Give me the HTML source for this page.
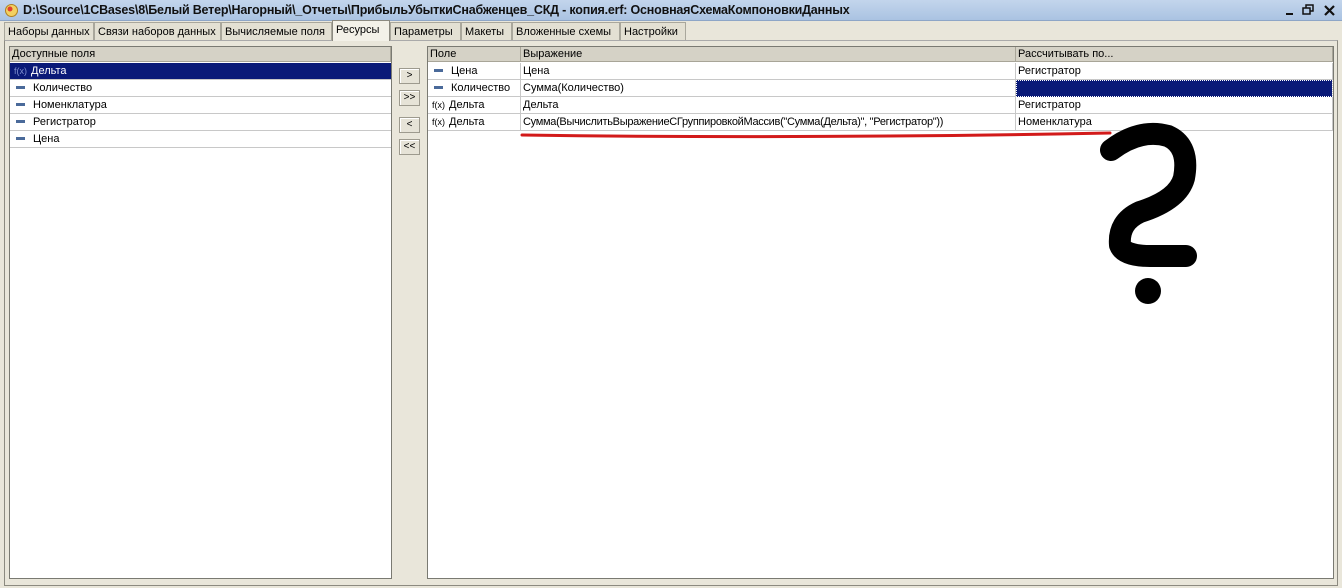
<!DOCTYPE html>
<html><head><meta charset="utf-8"><style>
*{margin:0;padding:0;box-sizing:border-box}
body{width:1342px;height:588px;background:#e9e6da;font-family:"Liberation Sans",sans-serif;font-size:11px;color:#000;position:relative;overflow:hidden}
.abs{position:absolute}
#title{left:0;top:0;width:1342px;height:21px;background:linear-gradient(#c3d5ec,#aac3e2);border-bottom:1px solid #8ea6c7}
#title span{position:absolute;left:23px;top:3px;font-size:12.5px;font-weight:bold;color:#111;letter-spacing:-0.2px}
.tab{position:absolute;top:22px;height:18px;border:1px solid #a9a79c;border-bottom:none;background:#e3e0d3;font-size:11px;padding:3px 0 0 3px;white-space:nowrap;overflow:hidden}
.tab.act{top:20px;height:21px;background:#f3f1e8;border-color:#8c8a80}
#panel{left:4px;top:40px;width:1334px;height:546px;border:1px solid #8c8a80;border-top:1px solid #aaa;background:#e9e6da}
.list{position:absolute;background:#fff;border:1px solid #7a7a72}
.hdr{position:absolute;top:0;height:15px;background:#d5d2c6;border-bottom:1px solid #a8a598;border-right:1px solid #a8a598;padding:1px 0 0 2px;font-size:11px}
.row{position:absolute;left:0;height:17px;border-bottom:1px solid #c8c8c8;font-size:11px}
.cell{position:absolute;top:0;height:17px;border-right:1px solid #c8c8c8;padding:2px 0 0 2px;white-space:nowrap}
.lc{position:absolute;top:0;left:0;height:17px;padding:2px 0 0 2px;white-space:nowrap}
.btn{position:absolute;left:399px;width:21px;height:16px;background:#e6e3d7;border:1px solid #9d9a8e;text-align:center;font-size:10px;line-height:14px;box-shadow:inset 1px 1px #fff}
.ic{display:inline-block;width:9px;height:3px;background:#4a6a9a;vertical-align:middle;margin:0 8px 2px 4px}
.fx{font-size:9px;margin:0 4px 0 2px}
</style></head><body>
<div id="title" class="abs">
<svg class="abs" style="left:4px;top:3px" width="15" height="15"><circle cx="7.5" cy="7.5" r="6" fill="#f2d060" stroke="#b08020"/><circle cx="6" cy="6" r="2.5" fill="#e04030"/></svg>
<span>D:\Source\1CBases\8\Белый Ветер\Нагорный\_Отчеты\ПрибыльУбыткиСнабженцев_СКД - копия.erf: ОсновнаяСхемаКомпоновкиДанных</span>
<div class="abs" style="left:1286px;top:13px;width:7px;height:2px;background:#111"></div>
<svg class="abs" style="left:1302px;top:4px" width="12" height="12"><rect x="4" y="1" width="7" height="6" fill="none" stroke="#111" stroke-width="1.5"/><rect x="1" y="4" width="7" height="6" fill="#b5cbe6" stroke="#111" stroke-width="1.5"/></svg>
<svg class="abs" style="left:1324px;top:5px" width="11" height="11"><path d="M1 1L10 10M10 1L1 10" stroke="#111" stroke-width="2.2"/></svg>
</div>
<div class="tab" style="left:4px;width:90px">Наборы данных</div>
<div class="tab" style="left:94px;width:127px">Связи наборов данных</div>
<div class="tab" style="left:221px;width:111px">Вычисляемые поля</div>
<div class="tab" style="left:390px;width:71px">Параметры</div>
<div class="tab" style="left:461px;width:51px">Макеты</div>
<div class="tab" style="left:512px;width:108px">Вложенные схемы</div>
<div class="tab" style="left:620px;width:66px">Настройки</div>
<div id="panel" class="abs"></div>
<div class="tab act" style="left:332px;width:58px">Ресурсы</div>

<div class="list" style="left:9px;top:46px;width:383px;height:533px">
<div class="hdr" style="left:0;width:381px">Доступные поля</div>
<div class="row" style="top:16px;width:381px;background:#0a1a78;color:#fff"><div class="lc"><span class="fx" style="color:#8090d0">f(x)</span>Дельта</div></div>
<div class="row" style="top:33px;width:381px"><div class="lc"><span class="ic"></span>Количество</div></div>
<div class="row" style="top:50px;width:381px"><div class="lc"><span class="ic"></span>Номенклатура</div></div>
<div class="row" style="top:67px;width:381px"><div class="lc"><span class="ic"></span>Регистратор</div></div>
<div class="row" style="top:84px;width:381px"><div class="lc"><span class="ic"></span>Цена</div></div>
</div>

<div class="btn" style="top:68px">&gt;</div>
<div class="btn" style="top:90px">&gt;&gt;</div>
<div class="btn" style="top:117px">&lt;</div>
<div class="btn" style="top:139px">&lt;&lt;</div>

<div class="list" style="left:427px;top:46px;width:907px;height:533px">
<div class="hdr" style="left:0;width:93px">Поле</div>
<div class="hdr" style="left:93px;width:495px">Выражение</div>
<div class="hdr" style="left:588px;width:317px">Рассчитывать по...</div>
<div class="row" style="top:16px;width:905px"><div class="cell" style="left:0;width:93px"><span class="ic"></span>Цена</div><div class="cell" style="left:93px;width:495px">Цена</div><div class="cell" style="left:588px;width:317px">Регистратор</div></div>
<div class="row" style="top:33px;width:905px"><div class="cell" style="left:0;width:93px"><span class="ic"></span>Количество</div><div class="cell" style="left:93px;width:495px">Сумма(Количество)</div><div class="cell" style="left:588px;width:317px;background:#0a1a78;outline:1px dotted #fff;outline-offset:-1px"></div></div>
<div class="row" style="top:50px;width:905px"><div class="cell" style="left:0;width:93px"><span class="fx">f(x)</span>Дельта</div><div class="cell" style="left:93px;width:495px">Дельта</div><div class="cell" style="left:588px;width:317px">Регистратор</div></div>
<div class="row" style="top:67px;width:905px"><div class="cell" style="left:0;width:93px"><span class="fx">f(x)</span>Дельта</div><div class="cell" style="left:93px;width:495px;letter-spacing:-0.3px">Сумма(ВычислитьВыражениеСГруппировкойМассив("Сумма(Дельта)", "Регистратор"))</div><div class="cell" style="left:588px;width:317px">Номенклатура</div></div>
</div>

<svg class="abs" style="left:0;top:0" width="1342" height="588">
<path d="M522 135 Q800 139 1110 133" stroke="#d21a1a" stroke-width="3" fill="none" stroke-linecap="round"/>
<path d="M1111 150 Q1140 128 1168 136 Q1190 146 1184 178 Q1178 200 1140 212 Q1118 222 1120 245 Q1124 256 1150 256 L1186 256" stroke="#000" stroke-width="22" fill="none" stroke-linecap="round" stroke-linejoin="round"/>
<circle cx="1148" cy="291" r="13" fill="#000"/>
</svg>
</body></html>
